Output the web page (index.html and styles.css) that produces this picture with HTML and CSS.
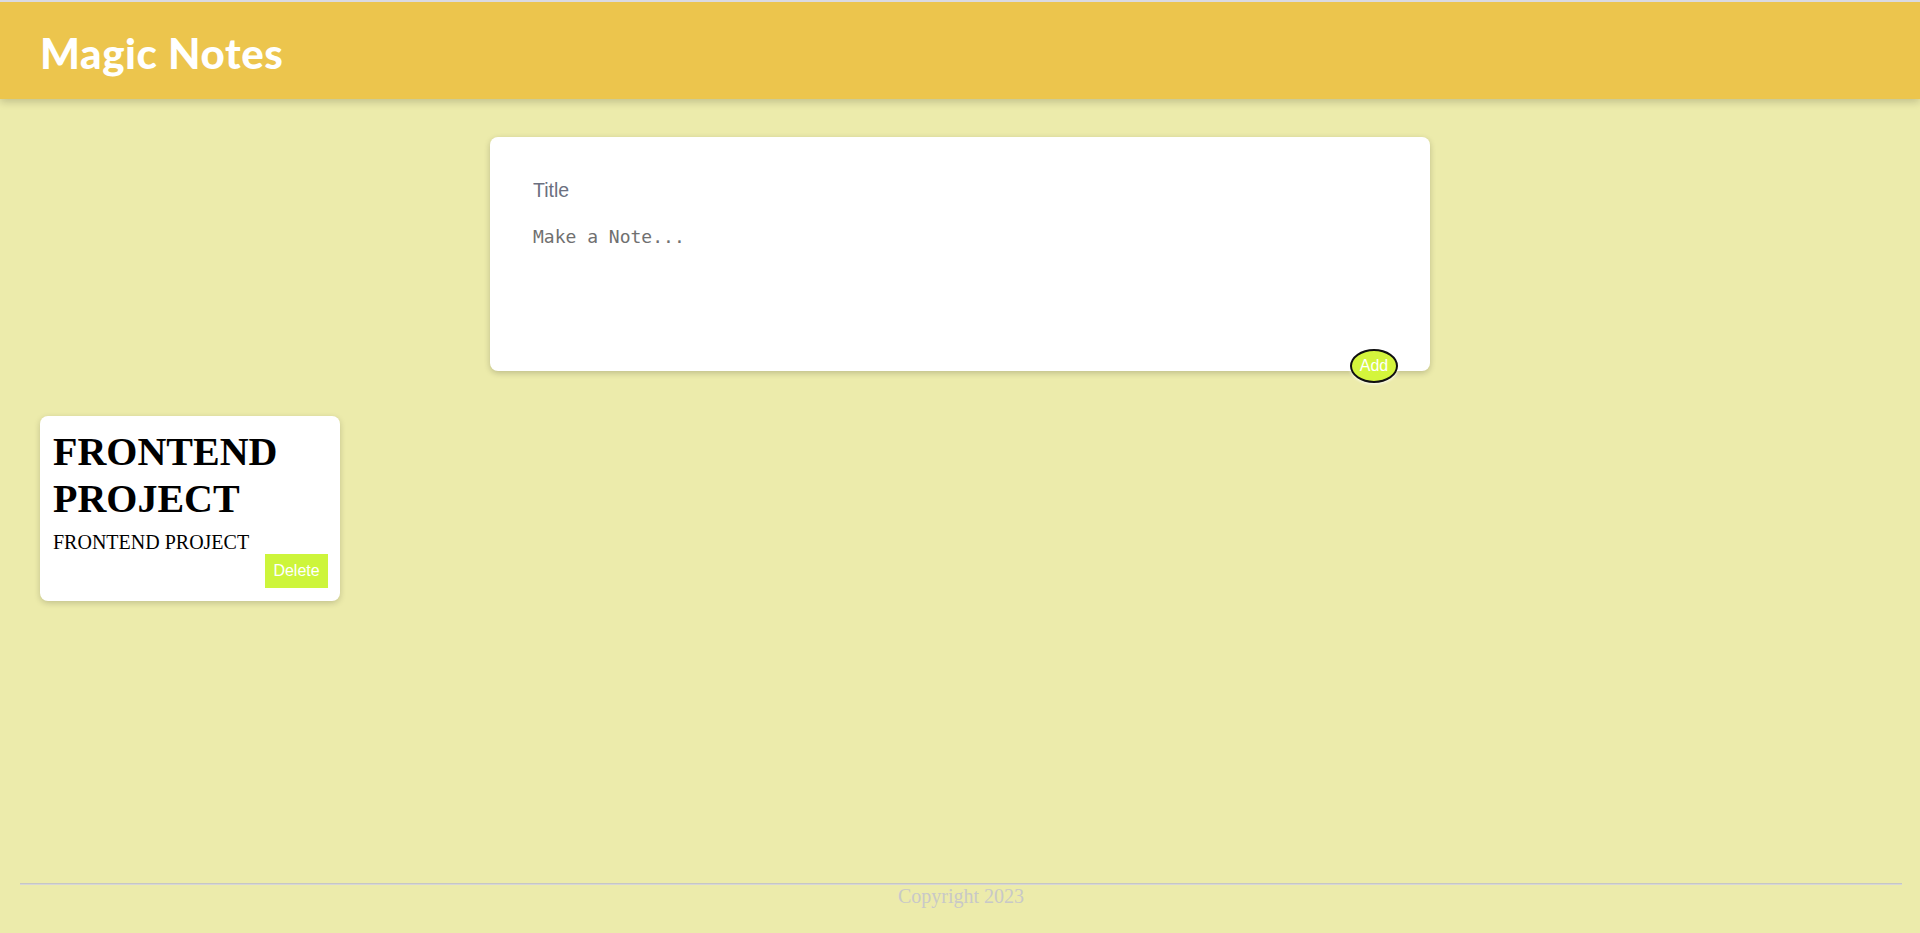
FILE: index.html
```html
<!DOCTYPE html>
<html lang="en">
<head>
<meta charset="utf-8">
<title>Magic Notes</title>
<link rel="stylesheet" href="styles.css">
</head>
<body>
<header class="topbar">
  <h1 class="brand">Magic Notes</h1>
</header>
<main class="main">
  <section class="composer">
    <input class="title-input" type="text" placeholder="Title">
    <textarea class="note-input" placeholder="Make a Note..."></textarea>
    <button class="add-btn">Add</button>
  </section>
  <section class="notes">
    <article class="note">
      <h2 class="note-title">FRONTEND PROJECT</h2>
      <p class="note-text">FRONTEND PROJECT</p>
      <div class="note-actions"><button class="delete-btn">Delete</button></div>
    </article>
  </section>
</main>
<footer class="footer">
  <hr class="rule">
  <p class="copy">Copyright 2023</p>
</footer>
</body>
</html>
```

FILE: styles.css
```css
* { box-sizing: border-box; }
html, body { margin: 0; padding: 0; }
body {
  background: #ecebab;
  border-top: 2px solid #dadae2;
  min-height: 933px;
  display: flex;
  flex-direction: column;
  font-family: "Liberation Serif", serif;
}
.topbar {
  height: 97px;
  background: #ecc54d;
  box-shadow: 0 3px 8px rgba(0, 0, 0, 0.18);
  display: flex;
  align-items: center;
  padding-left: 40px;
  position: relative;
  z-index: 1;
}
.brand {
  margin: 0;
  color: #ffffff;
  font-family: "Comic Sans MS", "Lato", sans-serif;
  font-weight: 900;
  font-size: 42px;
  letter-spacing: 0.6px;
  line-height: 1;
  padding-top: 4px;
}
.main {
  flex: 1;
  display: flex;
  flex-direction: column;
}
.composer {
  position: relative;
  width: 940px;
  height: 234px;
  margin: 38px auto 0;
  background: #ffffff;
  border-radius: 8px;
  box-shadow: 0 2px 6px rgba(0, 0, 0, 0.2);
  padding: 42px 43px 0;
  display: flex;
  flex-direction: column;
}
.title-input {
  border: none;
  outline: none;
  padding: 0;
  height: 23px;
  font-family: "Liberation Sans", Arial, sans-serif;
  font-size: 19.5px;
  color: #333;
  background: transparent;
}
.title-input::placeholder { color: #6b7080; }
.note-input {
  margin-top: 24px;
  border: none;
  outline: none;
  resize: none;
  padding: 0;
  height: 120px;
  font-family: "DejaVu Sans Mono", monospace;
  font-size: 18px;
  color: #333;
  background: transparent;
}
.note-input::placeholder { color: #707070; }
.add-btn {
  position: absolute;
  right: 32px;
  bottom: -12px;
  width: 48px;
  height: 34px;
  border: 2px solid #111;
  border-radius: 50%;
  background: #d4f53c;
  color: #ffffff;
  font-family: "Liberation Sans", Arial, sans-serif;
  font-size: 16px;
  padding: 0;
  box-shadow: 0 1px 3px rgba(255, 255, 255, 0.9);
}
.notes {
  display: flex;
  flex-wrap: wrap;
  padding: 45px 40px 0;
}
.note {
  width: 300px;
  background: #ffffff;
  border-radius: 8px;
  box-shadow: 0 2px 6px rgba(0, 0, 0, 0.18);
  padding: 12px 12px 13px 13px;
}
.note-title {
  margin: 0;
  font-family: "Liberation Serif", serif;
  font-weight: bold;
  font-size: 40px;
  line-height: 47px;
  color: #000;
}
.note-text {
  margin: 9px 0 0;
  font-size: 20px;
  line-height: 23px;
  color: #000;
}
.note-actions {
  display: flex;
  justify-content: flex-end;
}
.delete-btn {
  border: none;
  background: #cdf53b;
  color: #ffffff;
  font-family: "Liberation Sans", Arial, sans-serif;
  font-size: 16px;
  line-height: 18px;
  padding: 8px 8px;
  width: 63px;
  height: 34px;
}
.footer {
  margin: 0 18px 0 20px;
  padding-bottom: 25px;
}
.rule {
  margin: 0;
  border: none;
  border-top: 1px solid #c6c6c6;
  border-bottom: 1px solid #d6d6d6;
}
.copy {
  margin: 0;
  text-align: center;
  font-size: 20px;
  line-height: 23px;
  color: #c8c8c8;
}
```
